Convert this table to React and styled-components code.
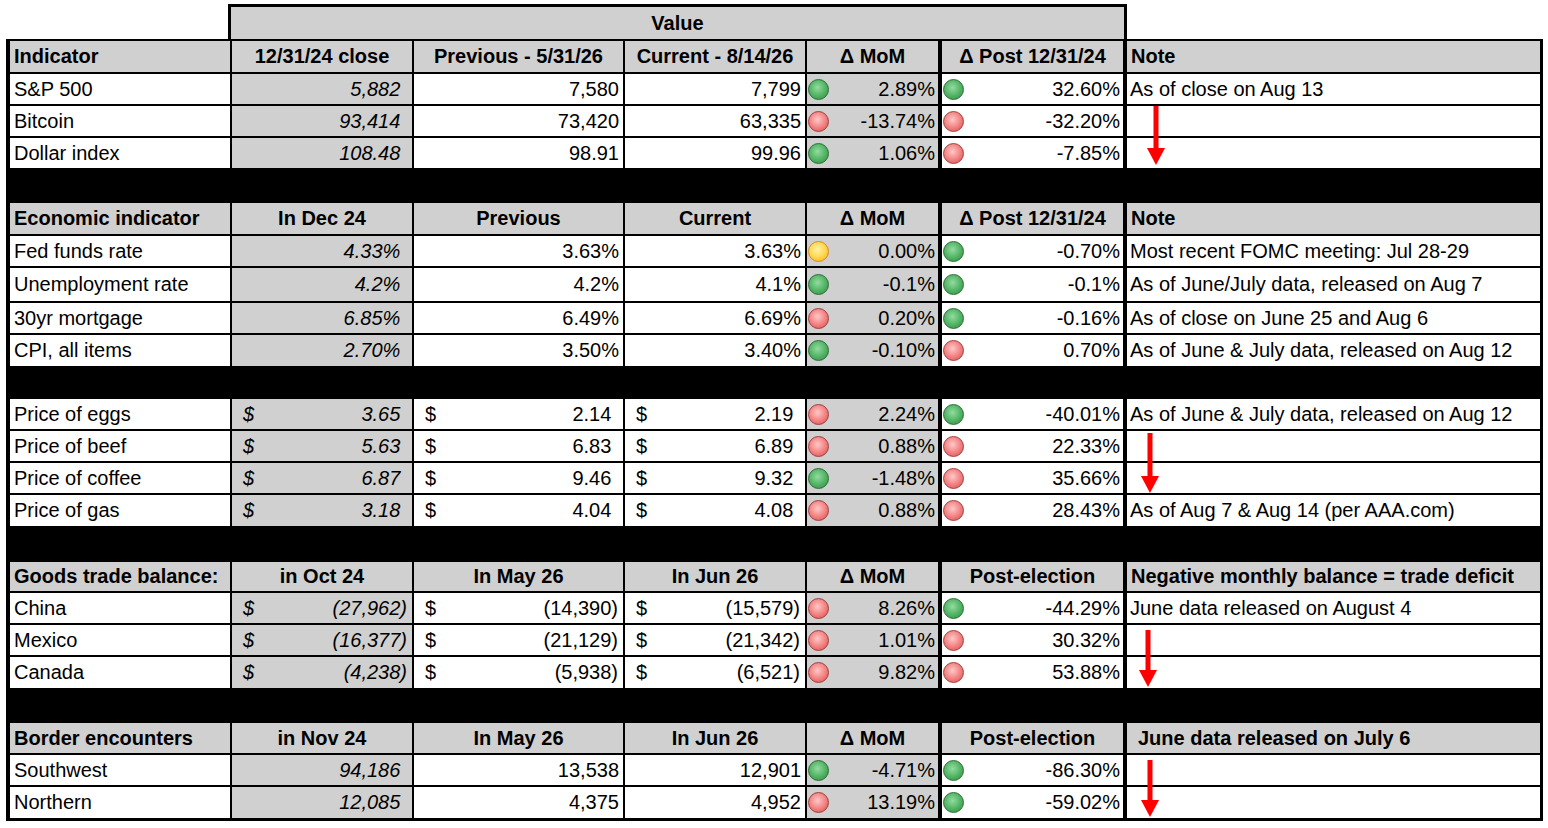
import styled, { createGlobalStyle } from "styled-components";

const GlobalStyle = createGlobalStyle`
  body {
    margin: 0;
    background: #ffffff;
    font-family: "Liberation Sans", Arial, sans-serif;
    color: #000000;
  }
`;

const COLUMNS = "220px 180px 209px 180px 131px 183px 415px";
const GRAY = "#d0d0d0";

const Page = styled.div`
  padding: 4px 0 0 6px;
  font-size: 20px;
`;

const ValueBox = styled.div`
  margin-left: 222px;
  width: 893px;
  height: 32px;
  box-sizing: content-box;
  border: 3px solid #000;
  border-bottom: none;
  background: ${GRAY};
  display: flex;
  align-items: center;
  justify-content: center;
  font-weight: 700;
`;

const Table = styled.div`
  width: 1537px;
  box-sizing: border-box;
  display: flex;
  flex-direction: column;
  gap: 2px;
  background: #000;
  padding: 2px 3px 3px 4px;
`;

const Row = styled.div`
  display: grid;
  grid-template-columns: ${COLUMNS};
  column-gap: 2px;
  height: ${(p) => p.$h}px;
`;

const Band = styled.div`
  height: ${(p) => p.$h}px;
`;

const Cell = styled.div`
  position: relative;
  display: flex;
  align-items: center;
  min-width: 0;
  white-space: nowrap;
  background: ${(p) => (p.$gray ? GRAY : "#fff")};
  margin-left: ${(p) => (p.$thick ? "2px" : "0")};
`;

const HeadCell = styled(Cell)`
  background: ${GRAY};
  font-weight: 700;
  justify-content: ${(p) => (p.$left ? "flex-start" : "center")};
  padding-left: ${(p) => (p.$left ? `${p.$indent || 4}px` : "0")};
`;

const LabelCell = styled(Cell)`
  padding-left: 4px;
`;

const NumCell = styled(Cell)`
  justify-content: space-between;
  padding: 0 ${(p) => (p.$pad ? 5 : 4)}px 0 11px;
  font-style: ${(p) => (p.$italic ? "italic" : "normal")};
`;

const Num = styled.span`
  margin-left: auto;
`;

const Pad = styled.span`
  visibility: hidden;
`;

const ChangeCell = styled(Cell)`
  justify-content: space-between;
  padding: 0 3px 0 1px;
`;

const DOTS = {
  g: { light: "#93dba0", mid: "#4fb262", dark: "#2f8a42", edge: "#2b6b34" },
  r: { light: "#ffc8c8", mid: "#f27e7e", dark: "#d24a4a", edge: "#a33b3b" },
  y: { light: "#fff4a8", mid: "#ffd44a", dark: "#f2a222", edge: "#d98a1a" },
};

const Dot = styled.span`
  width: 19px;
  height: 19px;
  border-radius: 50%;
  flex: none;
  border: 1px solid ${(p) => DOTS[p.$c].edge};
  background: radial-gradient(
    circle at 45% 40%,
    ${(p) => DOTS[p.$c].light} 0%,
    ${(p) => DOTS[p.$c].mid} 55%,
    ${(p) => DOTS[p.$c].dark} 100%
  );
`;

const NoteCell = styled(Cell)`
  padding-left: 3px;
`;

const ArrowMark = styled.svg`
  position: absolute;
  z-index: 2;
  left: ${(p) => p.$x}px;
  top: ${(p) => p.$y}px;
`;

const Arrow = ({ x, y, h }) => (
  <ArrowMark $x={x} $y={y} width="18" height={h} viewBox={`0 0 18 ${h}`}>
    <rect x="6.5" y="0" width="5" height={h - 16} fill="#ff0000" />
    <polygon points={`0,${h - 17} 18,${h - 17} 9,${h}`} fill="#ff0000" />
  </ArrowMark>
);

// value cell: v is a string, or [value] when prefixed with "$" (accounting)
const Value = ({ v, base }) => {
  const dollar = Array.isArray(v);
  const text = dollar ? v[0] : v;
  const paren = text.endsWith(")");
  const pad = dollar || base;
  return (
    <NumCell $gray={base} $italic={base} $pad={pad}>
      {dollar && <span>$</span>}
      <Num>
        {text}
        {pad && !paren && <Pad>)</Pad>}
      </Num>
    </NumCell>
  );
};

const sections = [
  {
    head: [
      "Indicator",
      "12/31/24 close",
      "Previous - 5/31/26",
      "Current - 8/14/26",
      "Δ MoM",
      "Δ Post 12/31/24",
      "Note",
    ],
    headH: 31,
    rows: [
      { h: 30, label: "S&P 500", vals: ["5,882", "7,580", "7,799"], mom: ["g", "2.89%"], post: ["g", "32.60%"], note: "As of close on Aug 13" },
      { h: 30, label: "Bitcoin", vals: ["93,414", "73,420", "63,335"], mom: ["r", "-13.74%"], post: ["r", "-32.20%"], arrow: { x: 20, y: 0, h: 59 } },
      { h: 30, label: "Dollar index", vals: ["108.48", "98.91", "99.96"], mom: ["g", "1.06%"], post: ["r", "-7.85%"] },
    ],
    band: 31,
  },
  {
    head: ["Economic indicator", "In Dec 24", "Previous", "Current", "Δ MoM", "Δ Post 12/31/24", "Note"],
    headH: 31,
    rows: [
      { h: 30, label: "Fed funds rate", vals: ["4.33%", "3.63%", "3.63%"], mom: ["y", "0.00%"], post: ["g", "-0.70%"], note: "Most recent FOMC meeting: Jul 28-29" },
      { h: 33, label: "Unemployment rate", vals: ["4.2%", "4.2%", "4.1%"], mom: ["g", "-0.1%"], post: ["g", "-0.1%"], note: "As of June/July data, released on Aug 7" },
      { h: 30, label: "30yr mortgage", vals: ["6.85%", "6.49%", "6.69%"], mom: ["r", "0.20%"], post: ["g", "-0.16%"], note: "As of close on June 25 and Aug 6" },
      { h: 31, label: "CPI, all items", vals: ["2.70%", "3.50%", "3.40%"], mom: ["g", "-0.10%"], post: ["r", "0.70%"], note: "As of June & July data, released on Aug 12" },
    ],
    band: 29,
  },
  {
    rows: [
      { h: 30, label: "Price of eggs", vals: [["3.65"], ["2.14"], ["2.19"]], mom: ["r", "2.24%"], post: ["g", "-40.01%"], note: "As of June & July data, released on Aug 12" },
      { h: 30, label: "Price of beef", vals: [["5.63"], ["6.83"], ["6.89"]], mom: ["r", "0.88%"], post: ["r", "22.33%"], arrow: { x: 14, y: 2, h: 60 } },
      { h: 30, label: "Price of coffee", vals: [["6.87"], ["9.46"], ["9.32"]], mom: ["g", "-1.48%"], post: ["r", "35.66%"] },
      { h: 31, label: "Price of gas", vals: [["3.18"], ["4.04"], ["4.08"]], mom: ["r", "0.88%"], post: ["r", "28.43%"], note: "As of Aug 7 & Aug 14 (per AAA.com)" },
    ],
    band: 32,
  },
  {
    head: ["Goods trade balance:", "in Oct 24", "In May 26", "In Jun 26", "Δ MoM", "Post-election", "Negative monthly balance = trade deficit"],
    headH: 29,
    rows: [
      { h: 30, label: "China", vals: [["(27,962)"], ["(14,390)"], ["(15,579)"]], mom: ["r", "8.26%"], post: ["g", "-44.29%"], note: "June data released on August 4" },
      { h: 30, label: "Mexico", vals: [["(16,377)"], ["(21,129)"], ["(21,342)"]], mom: ["r", "1.01%"], post: ["r", "30.32%"], arrow: { x: 12, y: 5, h: 57 } },
      { h: 31, label: "Canada", vals: [["(4,238)"], ["(5,938)"], ["(6,521)"]], mom: ["r", "9.82%"], post: ["r", "53.88%"] },
    ],
    band: 31,
  },
  {
    head: ["Border encounters", "in Nov 24", "In May 26", "In Jun 26", "Δ MoM", "Post-election", "June data released on July 6"],
    headH: 30,
    noteIndent: 11,
    rows: [
      { h: 30, label: "Southwest", vals: ["94,186", "13,538", "12,901"], mom: ["g", "-4.71%"], post: ["g", "-86.30%"], arrow: { x: 14, y: 5, h: 57 } },
      { h: 31, label: "Northern", vals: ["12,085", "4,375", "4,952"], mom: ["r", "13.19%"], post: ["g", "-59.02%"] },
    ],
  },
];

const HeaderRow = ({ labels, h, noteIndent }) => (
  <Row $h={h}>
    {labels.map((l, i) => (
      <HeadCell
        key={i}
        $left={i === 0 || i === 6}
        $indent={i === 6 ? noteIndent : 4}
        $thick={i >= 5}
      >
        {l}
      </HeadCell>
    ))}
  </Row>
);

const DataRow = ({ row }) => (
  <Row $h={row.h}>
    <LabelCell>{row.label}</LabelCell>
    <Value v={row.vals[0]} base />
    <Value v={row.vals[1]} />
    <Value v={row.vals[2]} />
    <ChangeCell $gray>
      <Dot $c={row.mom[0]} />
      {row.mom[1]}
    </ChangeCell>
    <ChangeCell $thick>
      <Dot $c={row.post[0]} />
      {row.post[1]}
    </ChangeCell>
    <NoteCell $thick>
      {row.note}
      {row.arrow && <Arrow {...row.arrow} />}
    </NoteCell>
  </Row>
);

const App = () => (
  <Page>
    <GlobalStyle />
    <ValueBox>Value</ValueBox>
    <Table>
      {sections.map((s, si) => [
        s.head && (
          <HeaderRow key={`h${si}`} labels={s.head} h={s.headH} noteIndent={s.noteIndent} />
        ),
        ...s.rows.map((r) => <DataRow key={r.label} row={r} />),
        s.band && <Band key={`b${si}`} $h={s.band} />,
      ])}
    </Table>
  </Page>
);

export default App;
